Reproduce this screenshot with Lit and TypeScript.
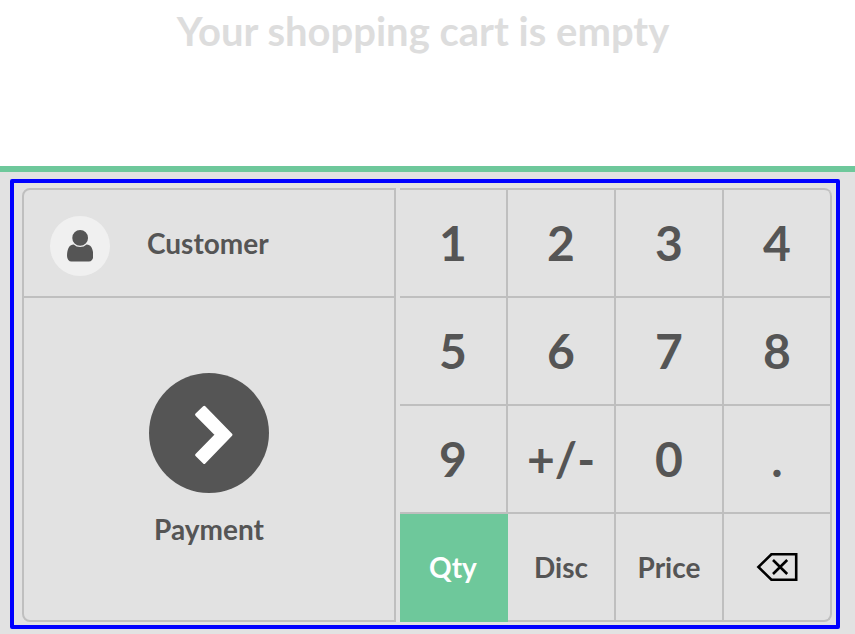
import { LitElement, html, css } from "lit";
import { customElement } from "lit/decorators.js";
import { classMap } from "lit/directives/class-map.js";

type Key = { label: string; mode?: boolean; active?: boolean; erase?: boolean };

const KEYS: Key[] = [
  ...["1", "2", "3", "4", "5", "6", "7", "8", "9", "+/-", "0", "."].map((label) => ({ label })),
  { label: "Qty", mode: true, active: true },
  { label: "Disc", mode: true },
  { label: "Price", mode: true },
  { label: "Backspace", erase: true },
];

@customElement("action-pad")
class ActionPad extends LitElement {
  static styles = css`
    :host {
      display: flex;
      flex-direction: column;
      box-sizing: border-box;
      width: 374px;
      height: 434px;
      border: 2px solid #bfbfbf;
      border-radius: 8px 0 0 8px;
    }
    button {
      font: inherit;
      color: inherit;
      background: none;
      border: 0;
      margin: 0;
      padding: 0;
    }
    .customer {
      display: flex;
      align-items: center;
      box-sizing: border-box;
      height: 108px;
      padding-left: 26px;
      border-bottom: 2px solid #bfbfbf;
    }
    .avatar {
      display: flex;
      align-items: center;
      justify-content: center;
      width: 60px;
      height: 60px;
      margin: 6px 37px 0 0;
      border-radius: 50%;
      background: #f0f0f0;
    }
    .payment {
      flex: 1;
      display: flex;
      flex-direction: column;
      align-items: center;
      padding-top: 75px;
    }
    .go {
      width: 120px;
      height: 120px;
      margin-bottom: 19px;
      border-radius: 50%;
      background: #555;
    }
    svg {
      display: block;
    }
  `;
  render() {
    return html`
      <button class="customer">
        <span class="avatar">
          <svg width="26.3" height="31.5" viewBox="256 128 1280 1536" fill="#555">
            <path
              d="M1536 1399q0 109-62.5 187t-150.5 78h-854q-88 0-150.5-78t-62.5-187q0-85 8.5-160.5t31.5-152 58.5-131 94-89 134.5-34.5q131 128 313 128t313-128q76 0 134.5 34.5t94 89 58.5 131 31.5 152 8.5 160.5zm-256-887q0 159-112.5 271.5t-271.5 112.5-271.5-112.5-112.5-271.5 112.5-271.5 271.5-112.5 271.5 112.5 112.5 271.5z"
            />
          </svg>
        </span>
        <span>Customer</span>
      </button>
      <button class="payment">
        <span class="go">
          <svg width="120" height="120" viewBox="0 0 120 120">
            <path
              d="M55.2 34.3 82 61.7 55.2 89.5 47.6 82 67.4 61.7 47.6 41.6z"
              fill="#fff"
              stroke="#fff"
              stroke-width="3"
              stroke-linejoin="round"
            />
          </svg>
        </span>
        <span>Payment</span>
      </button>
    `;
  }
}

@customElement("num-pad")
class NumPad extends LitElement {
  static styles = css`
    :host {
      display: grid;
      grid-template-columns: repeat(4, 108px);
      grid-auto-rows: 108px;
      border-top: 2px solid #bfbfbf;
      border-radius: 0 8px 8px 0;
      overflow: hidden;
    }
    button {
      display: flex;
      align-items: center;
      justify-content: center;
      font: inherit;
      font-size: 48px;
      color: inherit;
      background: none;
      margin: 0;
      padding: 0;
      border: solid #bfbfbf;
      border-width: 0 2px 2px 0;
    }
    .mode {
      font-size: 28px;
    }
    .active {
      color: #fff;
      background: #6ec89b;
      border-color: #6ec89b;
    }
    .top-end {
      border-top-right-radius: 6px;
    }
    .erase {
      border-bottom-right-radius: 8px;
    }
  `;
  render() {
    return KEYS.map(
      (k, i) => html`
        <button
          aria-label=${k.label}
          class=${classMap({
            mode: !!k.mode,
            active: !!k.active,
            erase: !!k.erase,
            "top-end": i === 3,
          })}
        >
          ${k.erase
            ? html`<svg width="42" height="30" viewBox="0 0 42 30" fill="none" stroke="#000" stroke-width="2.6">
                <path d="M15.4 2.2H40.2V27.8H15.4L2.4 15z" />
                <path d="M17 8 31.2 22M31.2 8 17 22" />
              </svg>`
            : k.label}
        </button>
      `,
    );
  }
}

@customElement("app-root")
class AppRoot extends LitElement {
  static styles = css`
    :host {
      display: flex;
      flex-direction: column;
      height: 634px;
      overflow: hidden;
      background: #fff;
      color: #555;
      font: 700 28px/34px Lato, sans-serif;
    }
    .order {
      box-sizing: border-box;
      height: 166px;
      padding: 7px 9px 0 0;
      color: #ddd;
      font-size: 40px;
      line-height: 48px;
      text-align: center;
    }
    .pads {
      flex: 1;
      box-sizing: border-box;
      padding: 7px 0 0 10px;
      border-top: 6px solid #6ec89b;
      background: #e2e2e2;
    }
    .frame {
      display: flex;
      gap: 4px;
      box-sizing: border-box;
      width: 830px;
      height: 450px;
      padding: 5px 4px 0 8px;
      border: 4px solid #00f;
      border-radius: 2px;
    }
  `;
  render() {
    return html`
      <div class="order">Your shopping cart is empty</div>
      <div class="pads">
        <div class="frame">
          <action-pad></action-pad>
          <num-pad></num-pad>
        </div>
      </div>
    `;
  }
}
